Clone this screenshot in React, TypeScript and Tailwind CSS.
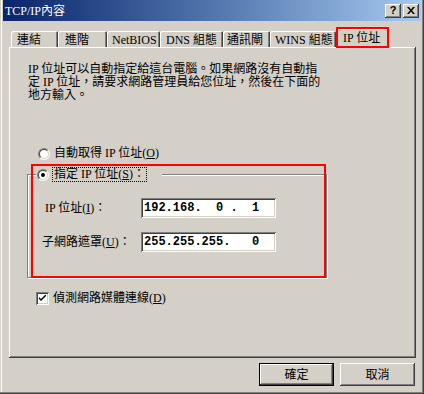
import React from "react";

const font = { fontFamily: '"Liberation Serif", "Noto Sans CJK TC", serif' };

const raised =
  "shadow-[inset_-1px_-1px_0_#404040,inset_1px_1px_0_#ffffff,inset_-2px_-2px_0_#808080,inset_2px_2px_0_#d4d0c8]";
const sunken =
  "shadow-[inset_1px_1px_0_#808080,inset_-1px_-1px_0_#ffffff,inset_2px_2px_0_#404040,inset_-2px_-2px_0_#d4d0c8]";

function Mn({ k }: { k: string }) {
  return (
    <>
      (<span className="underline underline-offset-1">{k}</span>)
    </>
  );
}

function Radio({ checked }: { checked?: boolean }) {
  return (
    <div className="w-[12px] h-[12px] shrink-0 rounded-full border border-t-[#808080] border-l-[#808080] border-b-white border-r-white">
      <div className="w-full h-full rounded-full border border-t-[#404040] border-l-[#404040] border-b-[#d4d0c8] border-r-[#d4d0c8] bg-white flex items-center justify-center">
        {checked && <div className="w-[4px] h-[4px] rounded-full bg-black" />}
      </div>
    </div>
  );
}

function Tab({ label, w, pl, active }: { label: React.ReactNode; w: number; pl: number; active?: boolean }) {
  return (
    <div
      className={`flex items-start bg-[#d4d0c8] rounded-tl-[2px] rounded-tr-[2px] shadow-[inset_1px_1px_0_#ffffff,inset_-1px_0_0_#404040,inset_-2px_0_0_#808080] ${
        active ? "relative z-10 h-[19px] pt-[2px]" : "h-[17px] pt-[2px]"
      }`}
      style={{ width: w, paddingLeft: pl }}
    >
      <span className="text-[12px] leading-[14px] whitespace-nowrap">{label}</span>
    </div>
  );
}

export default function App() {
  const tabs = [
    { label: "連結", w: 47, pl: 6 },
    { label: "進階", w: 49, pl: 7 },
    { label: "NetBIOS", w: 53, pl: 5 },
    { label: "DNS 組態", w: 63, pl: 6 },
    { label: "通訊閘", w: 47, pl: 4 },
    { label: "WINS 組態", w: 66, pl: 5 },
  ];

  return (
    <div
      className="relative w-[424px] h-[394px] bg-[#d4d0c8] text-black flex flex-col shadow-[inset_-1px_-1px_0_#404040,inset_-2px_-2px_0_#808080,inset_1px_0_0_#d4d0c8,inset_2px_0_0_#ffffff] overflow-hidden"
      style={font}
    >
      {/* 標題列 */}
      <div className="ml-[3px] w-[418px] h-[21px] shrink-0 flex items-center justify-between bg-linear-to-r from-[#0a246a] to-[#a6caf0] pl-[2px] pr-[2px]">
        <span className="text-white text-[12px] leading-[14px]">TCP/IP內容</span>
        <div className="flex gap-[2px]">
          <div className={`w-[16px] h-[14px] bg-[#d4d0c8] flex items-center justify-center ${raised}`}>
            <span
              className="text-[11px] leading-[11px] font-bold"
              style={{ fontFamily: '"Liberation Sans", sans-serif' }}
            >
              ?
            </span>
          </div>
          <div className={`w-[16px] h-[14px] bg-[#d4d0c8] flex items-center justify-center ${raised}`}>
            <svg width="8" height="7" viewBox="0 0 8 7">
              <path d="M0 0 L2 0 L4 2.5 L6 0 L8 0 L5 3.5 L8 7 L6 7 L4 4.5 L2 7 L0 7 L3 3.5 Z" fill="#000" />
            </svg>
          </div>
        </div>
      </div>

      {/* 頁籤 */}
      <div className="ml-[11px] mt-[8px] h-[19px] -mb-[1px] flex items-end shrink-0">
        {tabs.map(t => (
          <Tab key={t.label} label={t.label} w={t.w} pl={t.pl} />
        ))}
        <Tab label="IP 位址" w={53} pl={7} active />
      </div>

      {/* 內容面板 */}
      <div className="ml-[9px] w-[407px] h-[311px] shrink-0 bg-[#d4d0c8] flex flex-col shadow-[inset_-1px_-1px_0_#404040,inset_1px_1px_0_#ffffff,inset_-2px_-2px_0_#808080]">
        <p className="mt-[16px] ml-[19px] text-[12px] leading-[13px] whitespace-nowrap">
          IP 位址可以自動指定給這台電腦。如果網路沒有自動指
          <br />
          定 IP 位址，請要求網路管理員給您位址，然後在下面的
          <br />
          地方輸入。
        </p>

        <div className="mt-[45px] ml-[29px] h-[13px] flex items-center gap-[4px]">
          <Radio />
          <span className="text-[12px] leading-[13px] whitespace-nowrap">
            自動取得 IP 位址<Mn k="O" />
          </span>
        </div>

        {/* 群組方塊 */}
        <div className="mt-[14px] ml-[18px] w-[300px] h-[104px] border border-[#808080] shadow-[inset_1px_1px_0_#ffffff,1px_1px_0_#ffffff] flex flex-col">
          <div className="-mt-[8px] ml-[8px] w-fit h-[15px] bg-[#d4d0c8] flex items-center pl-[1px] pr-[15px] gap-[3px]">
            <Radio checked />
            <span className="h-[15px] border border-dotted border-black pl-[1px] pr-[1px] text-[12px] leading-[13px] whitespace-nowrap">
              指定 IP 位址<Mn k="S" />：
            </span>
          </div>

          <div className="mt-[16px] ml-[17px] h-[20px] flex items-center">
            <span className="w-[96px] text-[12px] leading-[14px] whitespace-nowrap">
              IP 位址<Mn k="I" />：
            </span>
            <div className={`w-[135px] h-[20px] bg-white flex items-center pl-[3px] ${sunken}`}>
              <span
                className="text-[12px] leading-[14px] font-bold whitespace-pre"
                style={{ fontFamily: '"Liberation Mono", monospace' }}
              >
                {"192.168.  0 .  1"}
              </span>
            </div>
          </div>

          <div className="mt-[14px] ml-[14px] h-[20px] flex items-center">
            <span className="w-[99px] text-[12px] leading-[14px] whitespace-nowrap">
              子網路遮罩<Mn k="U" />：
            </span>
            <div className={`w-[135px] h-[20px] bg-white flex items-center pl-[3px] ${sunken}`}>
              <span
                className="text-[12px] leading-[14px] font-bold whitespace-pre"
                style={{ fontFamily: '"Liberation Mono", monospace' }}
              >
                {"255.255.255.   0"}
              </span>
            </div>
          </div>
        </div>

        <div className="mt-[14px] ml-[27px] h-[13px] flex items-center gap-[4px]">
          <div className={`w-[13px] h-[13px] bg-white flex items-center justify-center shrink-0 ${sunken}`}>
            <svg width="7" height="7" viewBox="0 0 7 7">
              <path d="M0 2 L0 4 L2 6 L7 1 L7 -1 L2 4 Z" fill="#000" />
            </svg>
          </div>
          <span className="text-[12px] leading-[13px] whitespace-nowrap">
            偵測網路媒體連線<Mn k="D" />
          </span>
        </div>
      </div>

      {/* 按鈕 */}
      <div className="ml-[9px] w-[407px] mt-[5px] pr-[1px] flex justify-end gap-[6px]">
        <div className="w-[75px] h-[23px] border border-black bg-[#d4d0c8] flex items-center justify-center shadow-[inset_-1px_-1px_0_#404040,inset_1px_1px_0_#ffffff,inset_-2px_-2px_0_#808080]">
          <span className="text-[12px] leading-[14px]">確定</span>
        </div>
        <div className={`w-[75px] h-[23px] bg-[#d4d0c8] flex items-center justify-center ${raised}`}>
          <span className="text-[12px] leading-[14px]">取消</span>
        </div>
      </div>

      {/* 紅色標示框 */}
      <div className="absolute left-[336px] top-[27px] w-[53px] h-[21px] border-2 border-[#ff0000] z-20" />
      <div className="absolute left-[31px] top-[164px] w-[295px] h-[114px] border-2 border-[#ff0000] z-20" />
    </div>
  );
}
